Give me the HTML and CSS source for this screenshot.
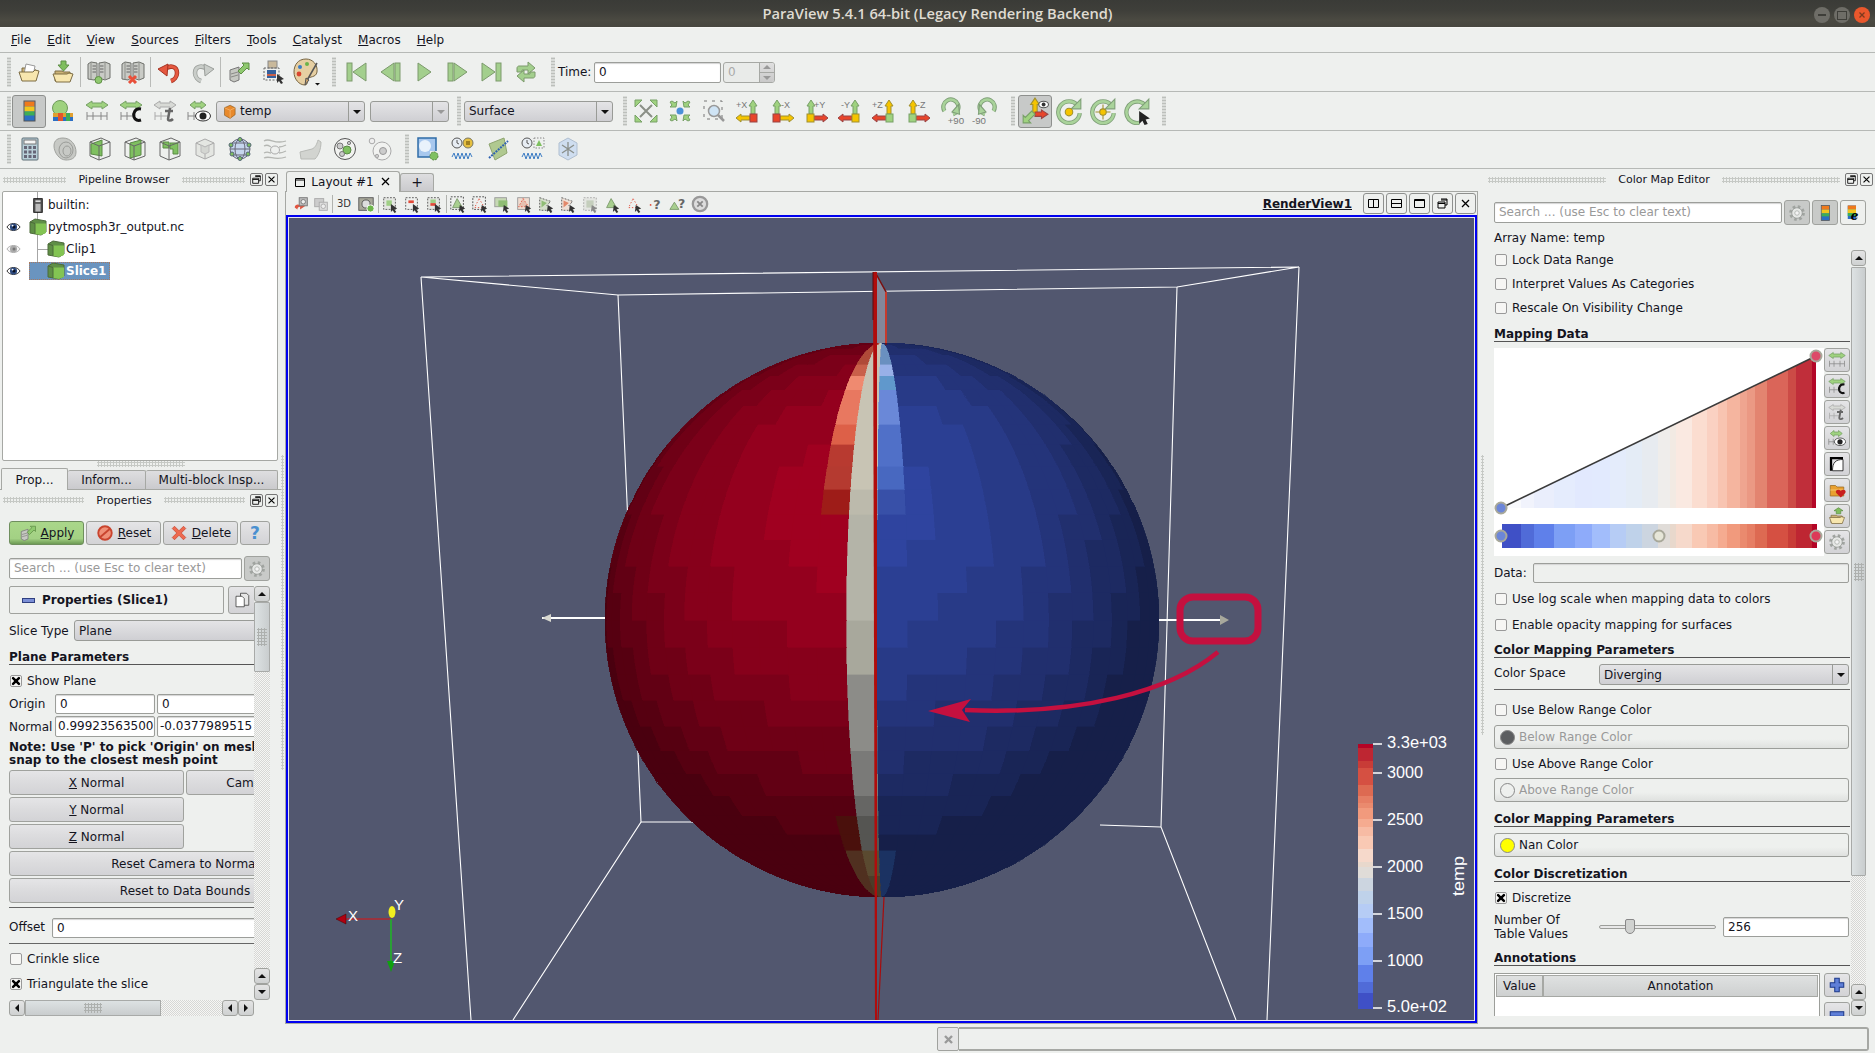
FILE: index.html
```html
<!DOCTYPE html>
<html lang="en">
<head>
<meta charset="utf-8">
<title>ParaView 5.4.1 64-bit</title>
<link rel="stylesheet" href="styles.css">
</head>
<body>
<svg class="defs" xmlns="http://www.w3.org/2000/svg">
  <symbol id="folder" viewBox="0 0 24 24"><path d="M5 8h8l2 2h4v10H5z" fill="#cdb377" stroke="#7d6c43"/><path d="M9 4l9 2-2 10-9-2z" fill="#fff" stroke="#999"/><path d="M2 12h14l2-2 4 1-3 10H5z" fill="#f7e6ae" stroke="#7d6c43"/></symbol>
  <symbol id="loadstate" viewBox="0 0 24 24"><path d="M4 11h7l2 1h6v9H4z" fill="#cdb377" stroke="#7d6c43"/><path d="M2 14h14l2-1 4 1-3 8H5z" fill="#f7e6ae" stroke="#7d6c43"/><path d="M10 1h5v4h3l-5.500 6L7 5h3z" fill="#7fbe5e" stroke="#5f8f46"/></symbol>
  <symbol id="towers" viewBox="0 0 24 24"><g fill="#c9cbc6" stroke="#6d6f6a"><path d="M1 4l3-2 6 1v15l-3 2-6-1z"/><path d="M12 3l6-1 5 2v14l-5 2-6-2z"/></g><path d="M4 2.500v17M18 2.500v17" stroke="#8d8f8a" fill="none"/><g stroke="#666"><path d="M5.500 6h3.500M5.500 9h3.500M5.500 12h3.500M13 6h3.500M13 9h3.500M13 12h3.500"/></g></symbol>
  <symbol id="conn" viewBox="0 0 24 24"><use href="#towers"/><path d="M11.500 19v2" stroke="#666"/><circle cx="11.500" cy="20" r="3.500" fill="#8fc96f" stroke="#5f8f46"/></symbol>
  <symbol id="disc" viewBox="0 0 24 24"><use href="#towers"/><path d="M8 16l7 7M15 16l-7 7" stroke="#e8503a" stroke-width="3"/></symbol>
  <symbol id="undo" viewBox="0 0 24 24"><path d="M8 9c5-4 12-3 12 4 0 4-3 7-6 8" fill="none" stroke="#a53323" stroke-width="4.500"/><path d="M8 9c5-4 12-3 12 4 0 4-3 7-6 8" fill="none" stroke="#e5583f" stroke-width="3"/><path d="M1 9l10-5-1 12z" fill="#e5583f" stroke="#a53323"/></symbol>
  <symbol id="redo" viewBox="0 0 24 24"><path d="M16 9c-5-4-12-3-12 4 0 4 3 7 6 8" fill="none" stroke="#9a9e9a" stroke-width="4.500"/><path d="M16 9c-5-4-12-3-12 4 0 4 3 7 6 8" fill="none" stroke="#c9cdc9" stroke-width="3"/><path d="M23 9L13 4l1 12z" fill="#c9cdc9" stroke="#9a9e9a"/></symbol>
  <symbol id="autoapply" viewBox="0 0 24 24"><path d="M3 10l9-3v13l-5 2-4-2z" fill="#c6c8c2" stroke="#777"/><path d="M4 14l7-2M4 17l7-2" stroke="#8a8a86"/><path d="M11 11l6-6-2-2h7v7l-2-2-6 6z" fill="#8fc96f" stroke="#5f8f46"/></symbol>
  <symbol id="pick" viewBox="0 0 24 24"><rect x="7" y="1" width="9" height="7" fill="#c9b99b" stroke="#888"/><rect x="3" y="8" width="15" height="12" fill="none" stroke="#666" stroke-dasharray="2 1.500"/><rect x="6" y="10" width="9" height="8" fill="#35609c"/><rect x="6" y="14" width="9" height="2" fill="#c9604a"/><path d="M16 14l7 5-3 1 2 3-2 1-2-3-2 2z" fill="#333"/></symbol>
  <symbol id="palette" viewBox="0 0 28 28"><path d="M13 1C5 1 1 7 1 14s5 13 11 13c3 0 2-4 3-6 1-3 8-1 9-7C25 7 20 1 13 1z" fill="#e6cfa2" stroke="#776542"/><circle cx="7" cy="9" r="2" fill="#3c7cc4"/><circle cx="14" cy="6" r="2" fill="#6cb34a"/><circle cx="6" cy="16" r="2.400" fill="#d9452f"/><path d="M24 5L13 24" stroke="#555" stroke-width="1.500"/><path d="M13 20l3 2-4 5z" fill="#caa26b" stroke="#555"/><path d="M22 25h5l-2.500 2.500z" fill="#111"/></symbol>
  <symbol id="first" viewBox="0 0 24 24"><g fill="#a3cf8d" stroke="#7c9a6c"><rect x="3" y="3" width="5" height="18"/><path d="M22 3v18L9 12z"/></g></symbol>
  <symbol id="prev" viewBox="0 0 24 24"><g fill="#a3cf8d" stroke="#7c9a6c"><path d="M16 3v18L3 12z"/><rect x="17" y="3" width="5" height="18"/></g></symbol>
  <symbol id="play" viewBox="0 0 24 24"><path d="M6 3v18l13-9z" fill="#a3cf8d" stroke="#7c9a6c"/></symbol>
  <symbol id="next" viewBox="0 0 24 24"><g fill="#a3cf8d" stroke="#7c9a6c"><rect x="2" y="3" width="5" height="18"/><path d="M8 3v18l13-9z"/></g></symbol>
  <symbol id="last" viewBox="0 0 24 24"><g fill="#a3cf8d" stroke="#7c9a6c"><path d="M2 3v18l13-9z"/><rect x="16" y="3" width="5" height="18"/></g></symbol>
  <symbol id="loop" viewBox="0 0 24 24"><g fill="#a3cf8d" stroke="#7c9a6c"><path d="M5 6h9V2l7 6-7 6v-4H8v2H3V8c0-1 1-2 2-2z"/><path d="M19 18h-9v4l-7-6 7-6v4h6v-2h5v4c0 1-1 2-2 2z"/></g></symbol>
  <symbol id="rainbow" viewBox="0 0 24 24"><rect x="7" y="2" width="11" height="20" fill="#2b6fc4" stroke="#555"/><rect x="7.500" y="2.500" width="10" height="5" fill="#ef7a1c"/><rect x="7.500" y="7.500" width="10" height="5" fill="#f2c61e"/><rect x="7.500" y="12.500" width="10" height="4" fill="#3fae55"/></symbol>
  <symbol id="scalarbar" viewBox="0 0 24 24"><circle cx="9" cy="9" r="7.500" fill="#9fd27f" stroke="#6e9a5a"/><rect x="2" y="14" width="20" height="8" fill="#e0a030"/><rect x="2" y="18" width="20" height="4" fill="#2b6fc4"/><rect x="7" y="14" width="5" height="8" fill="#e2542c"/><rect x="15" y="14" width="4" height="8" fill="#3fae55"/></symbol>
  <symbol id="rescale" viewBox="0 0 24 24"><path d="M1 6l6-4v2h10V2l6 4-6 4V8H7v2z" fill="#9fd27f" stroke="#77a066"/><path d="M2 17h20M2 13v8M8 13v8M16 13v8M22 13v8" stroke="#888" fill="none"/></symbol>
  <symbol id="rescaleC" viewBox="0 0 24 24"><path d="M1 6l6-4v2h10V2l6 4-6 4V8H7v2z" fill="#9fd27f" stroke="#77a066"/><path d="M2 17h14M2 13v8M8 13v8" stroke="#888" fill="none"/><path d="M22 10c-6-1-8 4-7 8 1 3 4 4 7 3" fill="none" stroke="#111" stroke-width="3"/></symbol>
  <symbol id="rescaleT" viewBox="0 0 24 24"><path d="M1 6l6-4v2h10V2l6 4-6 4V8H7v2z" fill="#d8dad6" stroke="#aaa"/><path d="M2 17h14M2 13v8M8 13v8" stroke="#aaa" fill="none"/><path d="M17 9l-2 11c0 2 3 2 5 0M12 12h8" fill="none" stroke="#666" stroke-width="2.500"/></symbol>
  <symbol id="rescaleE" viewBox="0 0 24 24"><path d="M3 6l5-4v2h6V2l5 4-5 4V8H8v2z" fill="#9fd27f" stroke="#77a066"/><path d="M1 17h9M1 13v8M7 13v8" stroke="#888" fill="none"/><ellipse cx="16" cy="17" rx="7.500" ry="5" fill="#fff" stroke="#333"/><circle cx="16" cy="17" r="3.500" fill="#222"/></symbol>
  <symbol id="cubeO" viewBox="0 0 24 24"><path d="M4 6l9-4 8 4v11l-8 6-9-5z" fill="#e8892c" stroke="#8a5a20"/><path d="M4 6l9 4 8-4M13 10v13" fill="none" stroke="#f8c080"/></symbol>
  <symbol id="cubeG" viewBox="0 0 18 18"><path d="M1 4l5-3 11 2v11l-5 3-11-2z" fill="#5f8f46" stroke="#4d6b3b"/><path d="M6 5.500h11V15l-5 2-6-1z" fill="#83c453"/><path d="M1 4l5 1.500V16" fill="none" stroke="#4d6b3b"/></symbol>
  <symbol id="server" viewBox="0 0 14 18"><rect x="2" y="1" width="10" height="16" fill="#555" stroke="#111"/><rect x="4" y="3" width="6" height="2" fill="#ddd"/><rect x="4" y="7" width="6" height="9" fill="#bbb"/></symbol>
  <symbol id="eye" viewBox="0 0 16 12"><path d="M1 6c3-5 11-5 14 0-3 5-11 5-14 0z" fill="#fff" stroke="#222"/><circle cx="8" cy="6" r="3.800" fill="#2c4a80"/><circle cx="8.500" cy="6" r="1.600" fill="#0a1020"/><circle cx="7" cy="4.500" r="1" fill="#fff"/></symbol>
  <symbol id="eyeoff" viewBox="0 0 16 12"><path d="M1 6c3-5 11-5 14 0-3 5-11 5-14 0z" fill="#f4f4f4" stroke="#aaa"/><circle cx="8" cy="6" r="3.800" fill="#aaa"/><circle cx="8.500" cy="6" r="1.600" fill="#777"/></symbol>
  <symbol id="check" viewBox="0 0 12 12"><path d="M2.500 2.500l7 7M9.500 2.500l-7 7" stroke="#000" stroke-width="3" stroke-linecap="round"/></symbol>
  <symbol id="float" viewBox="0 0 13 13"><path d="M5 2h6v6H9M2 5h7v6H2zM2 6.500h7M5 3h6" fill="none" stroke="#000"/></symbol>
  <symbol id="close" viewBox="0 0 13 13"><path d="M3 3l7 7M10 3l-7 7" stroke="#000" stroke-width="1.300"/></symbol>
  <symbol id="gear" viewBox="0 0 24 24"><circle cx="12" cy="12" r="8.500" fill="none" stroke="#a0a4a0" stroke-width="4" stroke-dasharray="3.400 3.270"/><circle cx="12" cy="12" r="7" fill="#e6e8e6" stroke="#909490"/><circle cx="12" cy="12" r="3" fill="#f4f4f4" stroke="#a8aca8"/></symbol>
  <symbol id="reset4" viewBox="0 0 24 24"><path d="M6 6l12 12M18 6L6 18" stroke="#8a8f86" stroke-width="2"/><g fill="#9fd27f" stroke="#77a066"><path d="M1 1h7L1 8zM23 1h-7l7 7zM1 23h7l-7-7zM23 23h-7l7-7z"/></g></symbol>
  <symbol id="zoomdata" viewBox="0 0 24 24"><circle cx="12" cy="12" r="3.500" fill="#4a90d8"/><g fill="#9fd27f" stroke="#77a066"><path d="M8 8H2l2-2-2-3 2-1 3 2 2-2zM16 8h6l-2-2 2-3-2-1-3 2-2-2zM8 16H2l2 2-2 3 2 1 3-2 2 2zM16 16h6l-2 2 2 3-2 1-3-2-2 2z"/></g></symbol>
  <symbol id="zoombox" viewBox="0 0 24 24"><rect x="2" y="2" width="18" height="18" fill="none" stroke="#777" stroke-dasharray="3 5"/><circle cx="12" cy="12" r="5.500" fill="#cfe4f5" stroke="#999" stroke-width="1.500"/><path d="M16 16l6 6" stroke="#999" stroke-width="2.500"/></symbol>
  <symbol id="pX" viewBox="0 0 24 24"><path d="M17 1l4 6h-2v8h-4V7h-2z" fill="#9fd27f" stroke="#77a066"/><path d="M0 19l5-4v2h9v4H5v2z" fill="#f5c400" stroke="#a09030"/><rect x="14" y="15" width="7" height="8" fill="#e8452a" stroke="#944"/></symbol>
  <symbol id="mX" viewBox="0 0 24 24"><path d="M7 1l4 6H9v8H5V7H3z" fill="#9fd27f" stroke="#77a066"/><path d="M24 19l-5-4v2h-9v4h9v2z" fill="#f5c400" stroke="#a09030"/><rect x="3" y="15" width="7" height="8" fill="#e8452a" stroke="#944"/></symbol>
  <symbol id="pY" viewBox="0 0 24 24"><path d="M7 1l4 6H9v8H5V7H3z" fill="#9fd27f" stroke="#77a066"/><path d="M24 19l-5-4v2h-9v4h9v2z" fill="#e8452a" stroke="#944"/><rect x="3" y="15" width="7" height="8" fill="#f5c400" stroke="#a09030"/></symbol>
  <symbol id="mY" viewBox="0 0 24 24"><path d="M17 1l4 6h-2v8h-4V7h-2z" fill="#9fd27f" stroke="#77a066"/><path d="M0 19l5-4v2h9v4H5v2z" fill="#e8452a" stroke="#944"/><rect x="14" y="15" width="7" height="8" fill="#f5c400" stroke="#a09030"/></symbol>
  <symbol id="pZ" viewBox="0 0 24 24"><path d="M17 1l4 6h-2v8h-4V7h-2z" fill="#f5c400" stroke="#a09030"/><path d="M0 19l5-4v2h9v4H5v2z" fill="#e8452a" stroke="#944"/><rect x="14" y="15" width="7" height="8" fill="#9fd27f" stroke="#77a066"/></symbol>
  <symbol id="mZ" viewBox="0 0 24 24"><path d="M7 1l4 6H9v8H5V7H3z" fill="#f5c400" stroke="#a09030"/><path d="M24 19l-5-4v2h-9v4h9v2z" fill="#e8452a" stroke="#944"/><rect x="3" y="15" width="7" height="8" fill="#9fd27f" stroke="#77a066"/></symbol>
  <symbol id="rotP" viewBox="0 0 26 26"><path d="M14 16a7 7 0 1 0-8-3" fill="none" stroke="#7f9f78" stroke-width="4"/><path d="M14 16a7 7 0 1 0-8-3" fill="none" stroke="#a9d39a" stroke-width="2.400"/><path d="M19 7l1 9-7-2z" fill="#a9d39a" stroke="#7f9f78"/></symbol>
  <symbol id="rotM" viewBox="0 0 26 26"><path d="M12 16a7 7 0 1 1 8-3" fill="none" stroke="#7f9f78" stroke-width="4"/><path d="M12 16a7 7 0 1 1 8-3" fill="none" stroke="#a9d39a" stroke-width="2.400"/><path d="M7 7L6 16l7-2z" fill="#a9d39a" stroke="#7f9f78"/></symbol>
  <symbol id="axes" viewBox="0 0 26 26"><path d="M13 1l4 6h-2v9h-4V7H9z" fill="#f5c400" stroke="#a09030"/><path d="M13 14h6v-2l6 4-6 4v-2h-6z" fill="#e8452a" stroke="#944"/><path d="M13 16l-6 6 2 2H2v-7l2 2 6-6z" fill="#9fd27f" stroke="#77a066"/><ellipse cx="21" cy="7" rx="4.500" ry="3" fill="#fff" stroke="#555"/><circle cx="21" cy="7" r="1.800" fill="#333"/></symbol>
  <symbol id="cen1" viewBox="0 0 26 26"><path d="M21 8a10 10 0 1 0 2 7" fill="none" stroke="#7f9f78" stroke-width="4"/><path d="M21 8a10 10 0 1 0 2 7" fill="none" stroke="#a9d39a" stroke-width="2.400"/><path d="M24 2v9h-9z" fill="#a9d39a" stroke="#7f9f78"/><circle cx="13" cy="14" r="3.500" fill="#f5c400" stroke="#a09030"/></symbol>
  <symbol id="cen2" viewBox="0 0 26 26"><path d="M21 8a10 10 0 1 0 2 7" fill="none" stroke="#7f9f78" stroke-width="4"/><path d="M21 8a10 10 0 1 0 2 7" fill="none" stroke="#a9d39a" stroke-width="2.400"/><path d="M24 2v9h-9z" fill="#a9d39a" stroke="#7f9f78"/><path d="M13 7v14M6 14h14" stroke="#a09030"/><circle cx="13" cy="14" r="3" fill="#f5c400" stroke="#a09030"/></symbol>
  <symbol id="cen3" viewBox="0 0 26 26"><path d="M21 8a10 10 0 1 0-6 16" fill="none" stroke="#7f9f78" stroke-width="4"/><path d="M21 8a10 10 0 1 0-6 16" fill="none" stroke="#a9d39a" stroke-width="2.400"/><path d="M24 2v9h-9z" fill="#a9d39a" stroke="#7f9f78"/><path d="M15 13l10 7-4 1 2 4-3 1-2-4-3 3z" fill="#222"/></symbol>
  <symbol id="calc" viewBox="0 0 24 24"><rect x="4" y="1" width="16" height="22" rx="1" fill="#b8cfd8" stroke="#5f6f76"/><rect x="6" y="3" width="12" height="4" fill="#f4f4f4" stroke="#777"/><g fill="#667"><rect x="6" y="9" width="3" height="3"/><rect x="10.500" y="9" width="3" height="3"/><rect x="15" y="9" width="3" height="3"/><rect x="6" y="13.500" width="3" height="3"/><rect x="10.500" y="13.500" width="3" height="3"/><rect x="15" y="13.500" width="3" height="3"/><rect x="6" y="18" width="3" height="3"/><rect x="10.500" y="18" width="3" height="3"/><rect x="15" y="18" width="3" height="3"/></g></symbol>
  <symbol id="contour" viewBox="0 0 24 24"><path d="M10 1c8 0 13 7 13 14s-6 8-10 8C6 23 1 15 1 9s4-8 9-8z" fill="#c7c9c5" stroke="#a0a29e"/><ellipse cx="13" cy="13" rx="7" ry="8" fill="none" stroke="#9a9c98"/><ellipse cx="14" cy="14" rx="4" ry="5" fill="none" stroke="#9a9c98"/></symbol>
  <symbol id="clip" viewBox="0 0 24 24"><path d="M2 5l11-4 9 4v14l-11 4-9-4z" fill="#eef0ee" stroke="#666"/><path d="M3 7l11-4v16L3 17z" fill="#7fc060" stroke="#5a8a45"/><path d="M2 5l9 4 11-4M11 9v14" fill="none" stroke="#666"/></symbol>
  <symbol id="slicei" viewBox="0 0 24 24"><path d="M2 5l11-4 9 4v14l-11 4-9-4z" fill="#eef0ee" stroke="#666"/><path d="M7 6l11-3v15l-11 3z" fill="#7fc060" stroke="#5a8a45"/><path d="M2 5l9 4 11-4M11 9v14" fill="none" stroke="#666"/></symbol>
  <symbol id="thresh" viewBox="0 0 24 24"><path d="M2 5l11-4 9 4v14l-11 4-9-4z" fill="#eef0ee" stroke="#666"/><path d="M5 5h6v6H5zM12 6h8v11h-5v-5h-3z" fill="#7fc060" stroke="#5a8a45"/><path d="M2 5l9 4 11-4M11 9v14" fill="none" stroke="#666"/></symbol>
  <symbol id="extract" viewBox="0 0 24 24"><path d="M3 6l9-4 9 4v12l-9 4-9-4z" fill="#e4e6e2" stroke="#aaa"/><path d="M3 6l9 4 9-4M12 10v12" fill="none" stroke="#aaa"/><path d="M8 8l4 2 4-2v7l-4 2-4-2z" fill="#d4d6d2" stroke="#bbb"/></symbol>
  <symbol id="glyph" viewBox="0 0 24 24"><circle cx="12" cy="12" r="10" fill="#c6d6ee" stroke="#667"/><ellipse cx="12" cy="12" rx="5" ry="10" fill="none" stroke="#667"/><path d="M2 12h20M4 6h16M4 18h16" stroke="#667" fill="none"/><g fill="#7fc060" stroke="#567"><circle cx="12" cy="2.500" r="2"/><circle cx="3" cy="8" r="2"/><circle cx="21" cy="8" r="2"/><circle cx="4" cy="17" r="2"/><circle cx="20" cy="17" r="2"/><circle cx="12" cy="21.500" r="2"/></g></symbol>
  <symbol id="stream" viewBox="0 0 24 24"><g fill="none" stroke="#b4b6b2" stroke-width="1.300"><path d="M1 4c6-4 10 4 22 0M1 9c4-2 5 0 7 1M16 10c3 0 5-1 7-2M1 16c4-2 5 0 7 0M16 16c3 0 5-1 7-2M1 21c6-3 10 3 22-1"/></g><ellipse cx="12" cy="13" rx="4.500" ry="4" fill="none" stroke="#aaa"/></symbol>
  <symbol id="warp" viewBox="0 0 24 24"><path d="M2 15l12-3c3-1 5-5 6-9l3 2c0 8-3 14-6 17H3z" fill="#d2d4d0" stroke="#b8bab6"/></symbol>
  <symbol id="group" viewBox="0 0 24 24"><circle cx="12" cy="12" r="10.500" fill="#f1f2f0" stroke="#555"/><circle cx="7" cy="9" r="3" fill="#ccc" stroke="#777"/><circle cx="14" cy="13" r="4" fill="#7fc060" stroke="#5a8a45"/><circle cx="9" cy="17" r="2.500" fill="#ccc" stroke="#777"/><circle cx="16" cy="6" r="1.600" fill="#ccc" stroke="#777"/></symbol>
  <symbol id="level" viewBox="0 0 24 24"><circle cx="14" cy="14" r="9" fill="#f1f2f0" stroke="#aaa"/><circle cx="15" cy="14" r="3.500" fill="#ccc" stroke="#999"/><circle cx="4" cy="4" r="2.800" fill="#eee" stroke="#aaa"/><circle cx="9" cy="19" r="1.700" fill="#ccc" stroke="#aaa"/></symbol>
  <symbol id="sheet" viewBox="0 0 24 24"><rect x="2" y="1" width="18" height="19" fill="#a8c8ee" stroke="#2f6ca8" stroke-width="1.500"/><circle cx="9" cy="9" r="6" fill="#e9f2fb"/><rect x="14" y="14" width="9" height="9" fill="#eef0ee"/><circle cx="18" cy="19" r="4" fill="#7fc060" stroke="#5a8a45" stroke-dasharray="2 1"/></symbol>
  <symbol id="plotsel" viewBox="0 0 24 24"><circle cx="6" cy="6" r="5" fill="#e8eef4" stroke="#555"/><path d="M6 3v3l2 1" stroke="#555" fill="none"/><circle cx="17" cy="6" r="5" fill="#e6c040" stroke="#776"/><rect x="15" y="4" width="4" height="4" fill="#a08020"/><path d="M1 20l2-4 2 6 2-6 2 6 2-6 2 6 2-6 2 6 2-6 2 4" fill="none" stroke="#3c7cc4"/></symbol>
  <symbol id="plotline" viewBox="0 0 24 24"><path d="M3 7l15-6 3 15-12 7z" fill="#b0c990" stroke="#8fa570"/><path d="M3 21L22 4" stroke="#2f62b0" stroke-width="2" stroke-dasharray="2 1"/></symbol>
  <symbol id="plottime" viewBox="0 0 24 24"><circle cx="6" cy="6" r="5" fill="#e8eef4" stroke="#555"/><path d="M6 3v3l2 1" stroke="#555" fill="none"/><rect x="13" y="1" width="10" height="10" fill="none" stroke="#888" stroke-dasharray="1.500 1.500"/><path d="M18 3l3 6h-6z" fill="#7fc060"/><path d="M1 20l2-4 2 6 2-6 2 6 2-6 2 6 2-6 2 6 2-6 2 4" fill="none" stroke="#3c7cc4"/></symbol>
  <symbol id="hex" viewBox="0 0 24 24"><path d="M12 1l9 5v12l-9 5-9-5V6z" fill="#cfdef0" stroke="#b0bfd0"/><path d="M12 5v14M6 8l12 8M18 8L6 16" stroke="#8a8f8a" stroke-width="1.300"/></symbol>
  <symbol id="vr1" viewBox="0 0 20 20"><path d="M3 14c0-4 4-4 6-3V8l6 4-6 4v-3c-2 0-3 1-3 3z" fill="#e25540"/><rect x="8" y="3" width="9" height="9" fill="#bbb" stroke="#777"/><circle cx="12.500" cy="7.500" r="2.500" fill="#eee" stroke="#777"/></symbol>
  <symbol id="vr2" viewBox="0 0 20 20"><rect x="3" y="4" width="10" height="9" fill="#ccc" stroke="#aaa"/><rect x="8" y="8" width="9" height="9" fill="#ddd" stroke="#aaa"/><circle cx="12.500" cy="12.500" r="2.500" fill="#eee" stroke="#aaa"/></symbol>
  <symbol id="cam" viewBox="0 0 20 20"><rect x="2" y="3" width="16" height="14" fill="#a8a89a" stroke="#555"/><circle cx="10" cy="10" r="4.500" fill="#ddd" stroke="#555"/><circle cx="15" cy="15" r="4" fill="#6db54a" stroke="#fff"/></symbol>
  <symbol id="sel1" viewBox="0 0 20 20"><rect x="3" y="3" width="13" height="13" fill="#e4e6e2" stroke="#555" stroke-dasharray="2 1.500"/><rect x="6" y="6" width="6" height="6" fill="#9fcf85"/><path d="M11 10l7 5-3 1 2 3-2 1-2-3-2 2z" fill="#333"/></symbol>
  <symbol id="sel2" viewBox="0 0 20 20"><rect x="3" y="3" width="13" height="13" fill="#eef0ee" stroke="#555" stroke-dasharray="2 1.500"/><rect x="6" y="6" width="6" height="3" fill="#e24a38"/><path d="M11 10l7 5-3 1 2 3-2 1-2-3-2 2z" fill="#333"/></symbol>
  <symbol id="sel3" viewBox="0 0 20 20"><rect x="3" y="3" width="13" height="13" fill="#e4e6e2" stroke="#555" stroke-dasharray="2 1.500"/><rect x="6" y="5" width="6" height="4" fill="#9fcf85"/><rect x="6" y="9" width="6" height="3" fill="#e24a38"/><path d="M11 10l7 5-3 1 2 3-2 1-2-3-2 2z" fill="#333"/></symbol>
  <symbol id="tri1" viewBox="0 0 20 20"><rect x="2" y="2" width="14" height="14" fill="none" stroke="#444" stroke-dasharray="2 1.500"/><path d="M9 4l6 10H4z" fill="#a8cf8f" stroke="#7c9a6c"/><path d="M12 11l6 4-3 1 2 3-2 1-2-3-2 2z" fill="#333"/></symbol>
  <symbol id="tri2" viewBox="0 0 20 20"><rect x="2" y="2" width="14" height="14" fill="none" stroke="#444" stroke-dasharray="2 1.500"/><path d="M9 4l6 10H4z" fill="none" stroke="#e24a38" stroke-dasharray="1.500 2"/><path d="M12 11l6 4-3 1 2 3-2 1-2-3-2 2z" fill="#333"/></symbol>
  <symbol id="blk1" viewBox="0 0 20 20"><rect x="2" y="3" width="13" height="10" fill="#c6d8b4" stroke="#999"/><rect x="6" y="6" width="10" height="7" fill="#8fbd74"/><path d="M12 11l6 4-3 1 2 3-2 1-2-3-2 2z" fill="#333"/></symbol>
  <symbol id="blk2" viewBox="0 0 20 20"><rect x="3" y="3" width="13" height="13" fill="#f0dcd0" stroke="#999"/><path d="M9 4l6 9H4z" fill="#e8c0b0" stroke="#e24a38" stroke-dasharray="1.500 2"/><path d="M12 11l6 4-3 1 2 3-2 1-2-3-2 2z" fill="#333"/></symbol>
  <symbol id="blk3" viewBox="0 0 20 20"><path d="M3 3l12 4-4 5 5 5H3z" fill="#d4dfca" stroke="#555" stroke-dasharray="2 1.500"/><path d="M5 6l6 3-6 5z" fill="#8fbd74"/><path d="M12 11l6 4-3 1 2 3-2 1-2-3-2 2z" fill="#333"/></symbol>
  <symbol id="blk4" viewBox="0 0 20 20"><path d="M3 3l12 4-4 5 5 5H3z" fill="#eee0d6" stroke="#555" stroke-dasharray="2 1.500"/><path d="M5 6l6 3-6 5z" fill="#e2886a"/><path d="M12 11l6 4-3 1 2 3-2 1-2-3-2 2z" fill="#333"/></symbol>
  <symbol id="blk5" viewBox="0 0 20 20"><rect x="3" y="3" width="14" height="14" fill="#e4e6e2" stroke="#aaa" stroke-dasharray="2 1.500"/><rect x="6" y="6" width="8" height="8" fill="#c4cebc"/><path d="M12 11l6 4-3 1 2 3-2 1-2-3-2 2z" fill="#888"/></symbol>
  <symbol id="tri3" viewBox="0 0 20 20"><path d="M9 4l6 10H4z" fill="#a8cf8f" stroke="#7c9a6c"/><path d="M12 11l6 4-3 1 2 3-2 1-2-3-2 2z" fill="#333"/></symbol>
  <symbol id="tri4" viewBox="0 0 20 20"><path d="M9 4l6 10H4z" fill="none" stroke="#e24a38" stroke-dasharray="1.500 2"/><path d="M12 11l6 4-3 1 2 3-2 1-2-3-2 2z" fill="#333"/></symbol>
  <symbol id="q2" viewBox="0 0 20 20"><path d="M6 8l5 8H1z" fill="#a8cf8f" stroke="#7c9a6c"/></symbol>
  <symbol id="clearsel" viewBox="0 0 20 20"><circle cx="10" cy="10" r="8" fill="#ddd" stroke="#999" stroke-width="2.500"/><path d="M7 7l6 6M13 7l-6 6" stroke="#888" stroke-width="2"/></symbol>
  <symbol id="invert" viewBox="0 0 24 24"><path d="M4 21V4h16" fill="none" stroke="#000" stroke-width="3"/><path d="M6 21C6 10 10 6 20 6v15z" fill="#fff" stroke="#000"/></symbol>
  <symbol id="fheart" viewBox="0 0 24 24"><path d="M3 6h7l2 2h9v12H3z" fill="#e9a030" stroke="#9a6a20"/><path d="M3 12h18" stroke="#f8d080"/><path d="M17 22l-6-6c-2-3 2-6 6-3 4-3 8 0 6 3z" fill="#c81e1e"/></symbol>
  <symbol id="fimport" viewBox="0 0 24 24"><path d="M4 11h7l2 1h6v9H4z" fill="#cdb377" stroke="#7d6c43"/><path d="M2 14h14l2-1 4 1-3 8H5z" fill="#f7e6ae" stroke="#7d6c43"/><path d="M11 9V5H8l6-4 6 4h-3v4z" fill="#7fbe5e" stroke="#5f8f46"/></symbol>
  <symbol id="rainbowe" viewBox="0 0 24 24"><rect x="5" y="2" width="11" height="18" fill="#2b6fc4"/><rect x="5" y="2" width="11" height="5" fill="#ef7a1c"/><rect x="5" y="7" width="11" height="5" fill="#f2c61e"/><rect x="5" y="12" width="11" height="4" fill="#3fae55"/></symbol>
  <symbol id="plus" viewBox="0 0 24 24"><path d="M9 3h6v6h6v6h-6v6H9v-6H3V9h6z" fill="#5f7fd8" stroke="#1d3a8a" stroke-width="1.400"/></symbol>
  <symbol id="minus" viewBox="0 0 24 24"><rect x="3" y="9" width="18" height="6" fill="#5f7fd8" stroke="#1d3a8a" stroke-width="1.400"/></symbol>
  <symbol id="copyi" viewBox="0 0 24 24"><path d="M10 3h8l3 3v13H10z" fill="#e6e6e6" stroke="#333"/><path d="M4 7h8l3 3v11H4z" fill="#fff" stroke="#333"/></symbol>
  <symbol id="reseti" viewBox="0 0 24 24"><circle cx="12" cy="12" r="9" fill="#f09078" stroke="#c9442e" stroke-width="2.500"/><path d="M5 18L19 6" stroke="#c9442e" stroke-width="2.500"/></symbol>
  <symbol id="deli" viewBox="0 0 24 24"><path d="M3 6l3-3 6 6 6-6 3 3-6 6 6 6-3 3-6-6-6 6-3-3 6-6z" fill="#ee6a50" stroke="#c9442e"/></symbol>
</svg>

<header class="titlebar">
  <span class="apptitle">ParaView 5.4.1 64-bit (Legacy Rendering Backend)</span>
  <div class="wm">
    <span class="wm-b wm-min"></span><span class="wm-b wm-max"></span><span class="wm-b wm-cl"><svg viewBox="0 0 10 10"><path d="M2.500 2.500l5 5M7.500 2.500l-5 5" stroke="#7c3a1e" stroke-width="1.300"/></svg></span>
  </div>
</header>

<nav class="menubar">
  <span><u>F</u>ile</span><span><u>E</u>dit</span><span><u>V</u>iew</span><span><u>S</u>ources</span><span><u>F</u>ilters</span><span><u>T</u>ools</span><span><u>C</u>atalyst</span><span><u>M</u>acros</span><span><u>H</u>elp</span>
</nav>

<div class="toolbar">
  <i class="tgrip first"></i>
  <span class="tb"><svg class="i"><use href="#folder"/></svg></span>
  <span class="tb"><svg class="i"><use href="#loadstate"/></svg></span>
  <i class="tsep"></i>
  <span class="tb"><svg class="i"><use href="#conn"/></svg></span>
  <span class="tb"><svg class="i"><use href="#disc"/></svg></span>
  <i class="tsep"></i>
  <span class="tb"><svg class="i"><use href="#undo"/></svg></span>
  <span class="tb"><svg class="i"><use href="#redo"/></svg></span>
  <i class="tsep"></i>
  <span class="tb"><svg class="i"><use href="#autoapply"/></svg></span>
  <span class="tb"><svg class="i"><use href="#pick"/></svg></span>
  <span class="tb"><svg class="i big"><use href="#palette"/></svg></span>
  <i class="tgrip"></i>
  <span class="tb"><svg class="i"><use href="#first"/></svg></span>
  <span class="tb"><svg class="i"><use href="#prev"/></svg></span>
  <span class="tb"><svg class="i"><use href="#play"/></svg></span>
  <span class="tb"><svg class="i"><use href="#next"/></svg></span>
  <span class="tb"><svg class="i"><use href="#last"/></svg></span>
  <span class="tb"><svg class="i"><use href="#loop"/></svg></span>
  <i class="tgrip"></i>
  <span class="timelbl">Time:</span>
  <span class="field timefield">0</span>
  <span class="spin"><span class="spin-val">0</span><span class="spin-btns"><b class="ar up"></b><b class="ar dn"></b></span></span>
</div>

<div class="toolbar">
  <i class="tgrip first"></i>
  <span class="tb on"><svg class="i"><use href="#rainbow"/></svg></span>
  <span class="tb"><svg class="i"><use href="#scalarbar"/></svg></span>
  <span class="tb"><svg class="i"><use href="#rescale"/></svg></span>
  <span class="tb"><svg class="i"><use href="#rescaleC"/></svg></span>
  <span class="tb"><svg class="i"><use href="#rescaleT"/></svg></span>
  <span class="tb"><svg class="i"><use href="#rescaleE"/></svg></span>
  <span class="combo c-temp"><svg class="mini"><use href="#cubeO"/></svg><em>temp</em><span class="drop"></span></span>
  <span class="combo c-comp dis"><em></em><span class="drop"></span></span>
  <i class="tgrip g2"></i>
  <span class="combo c-surf"><em>Surface</em><span class="drop"></span></span>
  <i class="tgrip g3"></i>
  <span class="tb"><svg class="i"><use href="#reset4"/></svg></span>
  <span class="tb"><svg class="i"><use href="#zoomdata"/></svg></span>
  <span class="tb"><svg class="i"><use href="#zoombox"/></svg></span>
  <span class="tb"><svg class="i" viewBox="0 0 24 24"><use href="#pX"/><text class="axt" x="0" y="9">+X</text></svg></span>
  <span class="tb"><svg class="i" viewBox="0 0 24 24"><use href="#mX"/><text class="axt" x="11" y="9">-X</text></svg></span>
  <span class="tb"><svg class="i" viewBox="0 0 24 24"><use href="#pY"/><text class="axt" x="10" y="9">+Y</text></svg></span>
  <span class="tb"><svg class="i" viewBox="0 0 24 24"><use href="#mY"/><text class="axt" x="3" y="9">-Y</text></svg></span>
  <span class="tb"><svg class="i" viewBox="0 0 24 24"><use href="#pZ"/><text class="axt" x="0" y="9">+Z</text></svg></span>
  <span class="tb"><svg class="i" viewBox="0 0 24 24"><use href="#mZ"/><text class="axt" x="11" y="9">-Z</text></svg></span>
  <span class="tb"><svg class="i big" viewBox="0 0 26 26"><use href="#rotP"/><text class="axt" x="9" y="25">+90</text></svg></span>
  <span class="tb"><svg class="i big" viewBox="0 0 26 26"><use href="#rotM"/><text class="axt" x="0" y="25">-90</text></svg></span>
  <i class="tgrip"></i>
  <span class="tb on"><svg class="i big"><use href="#axes"/></svg></span>
  <span class="tb"><svg class="i big"><use href="#cen1"/></svg></span>
  <span class="tb"><svg class="i big"><use href="#cen2"/></svg></span>
  <span class="tb"><svg class="i big"><use href="#cen3"/></svg></span>
  <i class="tgrip"></i>
</div>

<div class="toolbar t3">
  <i class="tgrip first"></i>
  <span class="tb"><svg class="i"><use href="#calc"/></svg></span>
  <span class="tb"><svg class="i"><use href="#contour"/></svg></span>
  <span class="tb"><svg class="i"><use href="#clip"/></svg></span>
  <span class="tb"><svg class="i"><use href="#slicei"/></svg></span>
  <span class="tb"><svg class="i"><use href="#thresh"/></svg></span>
  <span class="tb"><svg class="i"><use href="#extract"/></svg></span>
  <span class="tb"><svg class="i"><use href="#glyph"/></svg></span>
  <span class="tb"><svg class="i"><use href="#stream"/></svg></span>
  <span class="tb"><svg class="i"><use href="#warp"/></svg></span>
  <span class="tb"><svg class="i"><use href="#group"/></svg></span>
  <span class="tb"><svg class="i"><use href="#level"/></svg></span>
  <i class="tgrip g4"></i>
  <span class="tb"><svg class="i"><use href="#sheet"/></svg></span>
  <span class="tb"><svg class="i"><use href="#plotsel"/></svg></span>
  <span class="tb"><svg class="i"><use href="#plotline"/></svg></span>
  <span class="tb"><svg class="i"><use href="#plottime"/></svg></span>
  <span class="tb"><svg class="i"><use href="#hex"/></svg></span>
</div>

<main class="workspace">
  <aside class="dock left">
    <div class="docktitle"><i class="grip"></i><span>Pipeline Browser</span><i class="grip"></i><span class="dbtn"><svg><use href="#float"/></svg></span><span class="dbtn"><svg><use href="#close"/></svg></span></div>
    <div class="tree">
      <div class="row"><span class="eyeslot"></span><span class="item"><svg class="srv"><use href="#server"/></svg><span>builtin:</span></span></div>
      <div class="row"><span class="eyeslot"><svg class="eye"><use href="#eye"/></svg></span><span class="item"><svg class="cube"><use href="#cubeG"/></svg><span>pytmosph3r_output.nc</span></span></div>
      <div class="row child"><span class="eyeslot"><svg class="eye"><use href="#eyeoff"/></svg></span><span class="item"><svg class="cube"><use href="#cubeG"/></svg><span>Clip1</span></span></div>
      <div class="row child"><span class="eyeslot"><svg class="eye"><use href="#eye"/></svg></span><span class="item sel"><svg class="cube"><use href="#cubeG"/></svg><span>Slice1</span></span></div>
    </div>
    <i class="grip hsplit"></i>
    <div class="tabs">
      <span class="tab active">Prop...</span><span class="tab t2">Inform...</span><span class="tab t3t">Multi-block Insp...</span>
    </div>
    <div class="docktitle small"><i class="grip"></i><span>Properties</span><i class="grip"></i><span class="dbtn"><svg><use href="#float"/></svg></span><span class="dbtn"><svg><use href="#close"/></svg></span></div>
    <div class="actions">
      <span class="btn apply"><svg class="bi"><use href="#autoapply"/></svg><span><u>A</u>pply</span></span>
      <span class="btn"><svg class="bi"><use href="#reseti"/></svg><span><u>R</u>eset</span></span>
      <span class="btn"><svg class="bi"><use href="#deli"/></svg><span><u>D</u>elete</span></span>
      <span class="btn help">?</span>
    </div>
    <div class="searchrow">
      <span class="field search">Search ... (use Esc to clear text)</span>
      <span class="btn gearbtn"><svg class="bi"><use href="#gear"/></svg></span>
    </div>
    <div class="panel">
      <div class="pclip">
        <div class="pinner">
          <div class="phead"><span class="pbox"><i class="bluebar"></i><b>Properties (Slice1)</b></span><span class="btn copy"><svg class="bi"><use href="#copyi"/></svg></span></div>
          <div class="frow slicetype"><label>Slice Type</label><span class="combo wide"><em>Plane</em></span></div>
          <div class="section pp">Plane Parameters</div>
          <div class="chk sp"><span class="cb on"><svg><use href="#check"/></svg></span>Show Plane</div>
          <div class="frow origin"><label>Origin</label><span class="field num">0</span><span class="field num">0</span></div>
          <div class="frow normal"><label>Normal</label><span class="field num tight">0.99923563500</span><span class="field num tight">-0.0377989515</span></div>
          <div class="note">Note: Use 'P' to pick 'Origin' on mesh or<br>snap to the closest mesh point</div>
          <div class="normals">
            <span class="btn"><span><u>X</u> Normal</span></span><span class="btn">Camera Normal</span>
            <span class="btn"><span><u>Y</u> Normal</span></span><i></i>
            <span class="btn"><span><u>Z</u> Normal</span></span><i></i>
            <span class="btn full">Reset Camera to Normal</span>
            <span class="btn full">Reset to Data Bounds</span>
          </div>
          <hr class="rule r1">
          <div class="frow offset"><label>Offset</label><span class="field off">0</span></div>
          <hr class="rule r2">
          <div class="chk cr"><span class="cb"></span>Crinkle slice</div>
          <div class="chk tr"><span class="cb on"><svg><use href="#check"/></svg></span>Triangulate the slice</div>
        </div>
      </div>
      <div class="vscroll">
        <span class="sb up"></span><span class="thumb pth"><i class="dots"></i></span><span class="track"></span><span class="sb up"></span><span class="sb dn"></span>
      </div>
    </div>
    <div class="hscroll">
      <span class="sb lf"></span><span class="hthumb"><i class="dots"></i></span><span class="htrack"></span><span class="sb lf"></span><span class="sb rt"></span>
    </div>
  </aside>

  <i class="vsplit"></i>

  <section class="center">
    <div class="tabrow">
      <span class="ltab"><svg class="wnd" viewBox="0 0 12 12"><path d="M1.500 2.500h9v8h-9zM1.500 4h9" fill="none" stroke="#000"/></svg>Layout #1<svg class="wnd x" viewBox="0 0 13 13"><use href="#close"/></svg></span>
      <span class="ltab plus">+</span>
    </div>
    <div class="frame">
      <div class="viewbar">
        <span class="vb n"><svg><use href="#vr1"/></svg></span><span class="vb n"><svg><use href="#vr2"/></svg></span><i class="vsep"></i>
        <span class="vb three">3D</span><span class="vb"><svg><use href="#cam"/></svg></span><i class="vsep"></i>
        <span class="vb"><svg><use href="#sel1"/></svg></span><span class="vb"><svg><use href="#sel2"/></svg></span><span class="vb"><svg><use href="#sel3"/></svg></span><i class="vsep"></i>
        <span class="vb"><svg><use href="#tri1"/></svg></span><span class="vb"><svg><use href="#tri2"/></svg></span><span class="vb"><svg><use href="#blk1"/></svg></span><span class="vb"><svg><use href="#blk2"/></svg></span><span class="vb"><svg><use href="#blk3"/></svg></span><span class="vb"><svg><use href="#blk4"/></svg></span><span class="vb"><svg><use href="#blk5"/></svg></span><span class="vb"><svg><use href="#tri3"/></svg></span><span class="vb"><svg><use href="#tri4"/></svg></span>
        <span class="vb"><svg viewBox="0 0 20 20"><circle cx="4" cy="11" r="1" fill="#e24a38"/><text class="qt" x="7" y="16">?</text></svg></span>
        <span class="vb"><svg viewBox="0 0 20 20"><use href="#q2"/><text class="qt" x="10" y="14">?</text></svg></span>
        <span class="vb"><svg><use href="#clearsel"/></svg></span>
        <span class="vname">RenderView1</span>
        <span class="vbtn"><svg viewBox="0 0 13 13"><path d="M1.500 2.500h10v8h-10zM6.500 2.500v8" fill="none" stroke="#000"/></svg></span>
        <span class="vbtn"><svg viewBox="0 0 13 13"><path d="M1.500 2.500h10v8h-10zM1.500 6.500h10" fill="none" stroke="#000"/></svg></span>
        <span class="vbtn"><svg viewBox="0 0 13 13"><path d="M1.500 2.500h10v8h-10zM1.500 3.500h10" fill="none" stroke="#000"/></svg></span>
        <span class="vbtn"><svg viewBox="0 0 13 13"><use href="#float"/></svg></span>
        <span class="vbtn"><svg viewBox="0 0 13 13"><use href="#close"/></svg></span>
      </div>
      <div class="view">
        <svg class="scene" viewBox="289 218 1185 802" xmlns="http://www.w3.org/2000/svg">
          <rect x="289" y="218" width="1185" height="802" fill="#52576f"/>
          <g class="wire">
            <path d="M421 277L1299 267M618 295L1177 287M421 277L618 295M1177 287L1299 267"/>
            <path d="M421 277L471 1020M1299 267L1267 1020M618 295L641 822L513 1020M1177 287L1161 827L1236 1020"/>
            <path d="M641 822H700M1161 827L1100 825"/>
          </g>
          <path d="M542 618H610M1155 620H1222" stroke="#fff" stroke-width="1.800" fill="none"/>
          <path d="M542 618l9-4v8z" fill="#d8d8d0"/>
          <path d="M1229 620l-9-5v10z" fill="#a8a89c"/>
          <path d="M875 272L886 292V345H875z" fill="#838799"/>
          <g id="sphere" shape-rendering="crispEdges"></g>
          <path d="M875 272L886 292V345" fill="none" stroke="#7a1010" stroke-width="1.500"/>
          <path d="M886 292V343" stroke="#c53a2c" stroke-width="2"/>
          <path d="M873 272H877V1020H875z" fill="#b00c0c"/>
          <path d="M873 272V320" stroke="#5a0a10" stroke-width="1"/>
          <path d="M884 897L878 1020" stroke="#a80c0c" stroke-width="1.200" fill="none"/>
          <rect class="mark" x="1180" y="597" width="78" height="44" rx="13"/>
          <path class="arrowline" d="M1218 652C1170 692 1080 715 965 710"/>
          <path d="M928 711L971 699L962 710L970 722z" fill="#c4103f"/>
          <g class="orient">
            <path d="M391 919H342" stroke="#e01010" stroke-width="1.200"/>
            <path d="M336 919l10-5v10z" fill="#b00010" stroke="#400" stroke-width=".5"/>
            <path d="M391 919V965" stroke="#10d010" stroke-width="1.200"/>
            <path d="M387 961h8l-4 11z" fill="#10a010"/>
            <ellipse cx="392" cy="912" rx="3.500" ry="6" fill="#f0f020"/>
            <text x="348" y="921">X</text><text x="394" y="910">Y</text><text x="393" y="963">Z</text>
          </g>
          <g id="sbar" shape-rendering="crispEdges"></g>
          <g class="ticks">
            <path d="M1373 744h9M1373 773h9M1373 820h9M1373 867h9M1373 914h9M1373 961h9M1373 1008h9"/>
          </g>
          <g class="sblabels">
            <text x="1387" y="748" textLength="60" lengthAdjust="spacingAndGlyphs">3.3e+03</text>
            <text x="1387" y="778" textLength="36" lengthAdjust="spacingAndGlyphs">3000</text>
            <text x="1387" y="825" textLength="36" lengthAdjust="spacingAndGlyphs">2500</text>
            <text x="1387" y="872" textLength="36" lengthAdjust="spacingAndGlyphs">2000</text>
            <text x="1387" y="919" textLength="36" lengthAdjust="spacingAndGlyphs">1500</text>
            <text x="1387" y="966" textLength="36" lengthAdjust="spacingAndGlyphs">1000</text>
            <text x="1387" y="1012" textLength="60" lengthAdjust="spacingAndGlyphs">5.0e+02</text>
            <text transform="translate(1464 896) rotate(-90)" textLength="40" lengthAdjust="spacingAndGlyphs">temp</text>
          </g>
        </svg>
      </div>
    </div>
  </section>

  <i class="vsplit r"></i>

  <aside class="dock right">
    <div class="docktitle rt"><i class="grip"></i><span>Color Map Editor</span><i class="grip"></i><span class="dbtn"><svg><use href="#float"/></svg></span><span class="dbtn"><svg><use href="#close"/></svg></span></div>
    <div class="cmtop">
      <span class="field search">Search ... (use Esc to clear text)</span>
      <span class="btn sq on"><svg class="bi"><use href="#gear"/></svg></span>
      <span class="btn sq on"><svg class="bi"><use href="#rainbow"/></svg></span>
      <span class="btn sq lite"><svg class="bi" viewBox="0 0 24 24"><use href="#rainbowe"/><text class="et" x="9" y="21">e</text></svg></span>
    </div>
    <div class="arrayname">Array Name: temp</div>
    <div class="cmpanel">
      <div class="cmclip">
        <div class="chk c1"><span class="cb"></span>Lock Data Range</div>
        <div class="chk c2"><span class="cb"></span>Interpret Values As Categories</div>
        <div class="chk c2"><span class="cb"></span>Rescale On Visibility Change</div>
        <div class="section s-md">Mapping Data</div>
        <div class="chartrow">
          <svg class="chart" viewBox="1494 348 330 208" xmlns="http://www.w3.org/2000/svg">
            <defs><clipPath id="tri"><path d="M1501 508L1816 356V508z"/></clipPath></defs>
            <rect x="1494" y="348" width="330" height="208" fill="#fff"/>
            <g id="opac" clip-path="url(#tri)" shape-rendering="crispEdges"></g>
            <path d="M1501 508L1816 356" stroke="#3a3a3a" stroke-width="1.600"/>
            <g id="cbar" shape-rendering="crispEdges"></g>
            <g class="hd"><circle cx="1816" cy="356" r="5.500" fill="#dc4a68"/><circle cx="1501" cy="508" r="5.500" fill="#6c86d8"/><circle cx="1501" cy="536" r="5.500" fill="#6c86d8"/><circle cx="1659" cy="536" r="5.500" fill="#e6e6d8"/><circle cx="1816" cy="536" r="5.500" fill="#dc3a58"/></g>
          </svg>
          <div class="sidebtns">
            <span class="btn sb24"><svg class="bi"><use href="#rescale"/></svg></span>
            <span class="btn sb24"><svg class="bi"><use href="#rescaleC"/></svg></span>
            <span class="btn sb24"><svg class="bi"><use href="#rescaleT"/></svg></span>
            <span class="btn sb24"><svg class="bi"><use href="#rescaleE"/></svg></span>
            <span class="btn sb24"><svg class="bi"><use href="#invert"/></svg></span>
            <span class="btn sb24"><svg class="bi"><use href="#fheart"/></svg></span>
            <span class="btn sb24"><svg class="bi"><use href="#fimport"/></svg></span>
            <span class="btn sb24"><svg class="bi"><use href="#gear"/></svg></span>
          </div>
        </div>
        <div class="frow datar"><label>Data:</label><span class="field datafield"></span></div>
        <div class="chk c3"><span class="cb"></span>Use log scale when mapping data to colors</div>
        <div class="chk c4"><span class="cb"></span>Enable opacity mapping for surfaces</div>
        <div class="section s-a">Color Mapping Parameters</div>
        <div class="frow cspace"><label>Color Space</label><span class="combo csp"><em>Diverging</em><span class="drop"></span></span></div>
        <hr class="rule r3">
        <div class="chk c5"><span class="cb"></span>Use Below Range Color</div>
        <span class="colorbtn b1 dim"><i class="swatch s-g"></i>Below Range Color</span>
        <div class="chk c6"><span class="cb"></span>Use Above Range Color</div>
        <span class="colorbtn b2 dim"><i class="swatch s-w"></i>Above Range Color</span>
        <div class="section s-b">Color Mapping Parameters</div>
        <span class="colorbtn b3"><i class="swatch s-y"></i>Nan Color</span>
        <div class="section s-c">Color Discretization</div>
        <div class="chk c7"><span class="cb on"><svg><use href="#check"/></svg></span>Discretize</div>
        <div class="numrow">
          <label>Number Of<br>Table Values</label>
          <span class="slider"><i class="groove"></i><i class="knob"></i></span>
          <span class="field n256">256</span>
        </div>
        <div class="section s-d">Annotations</div>
        <div class="annot">
          <div class="atable"><div class="ahead"><span class="ah a1">Value</span><span class="ah a2">Annotation</span></div></div>
          <div class="abtns"><span class="btn sb24"><svg class="bi"><use href="#plus"/></svg></span><span class="btn sb24 m"><svg class="bi"><use href="#minus"/></svg></span></div>
        </div>
      </div>
      <div class="vscroll cms">
        <span class="sb up"></span><span class="thumb cth"><i class="dots"></i></span><span class="track"></span><span class="sb up"></span><span class="sb dn"></span>
      </div>
    </div>
  </aside>
</main>

<footer class="status">
  <span class="stbtn"><svg viewBox="0 0 13 13"><path d="M3 3l7 7M10 3l-7 7" stroke="#999" stroke-width="2.400"/></svg></span>
  <span class="stbox"></span>
</footer>
<script src="scene.js"></script>
</body>
</html>
```
FILE: styles.css
```css
* { box-sizing: border-box; }
html, body { margin: 0; padding: 0; }
body {
  width: 1875px; height: 1053px; overflow: hidden;
  background: #eef0ee; color: #14141e;
  font-family: "DejaVu Sans", sans-serif; font-size: 12px;
  display: flex; flex-direction: column;
}
.defs { position: absolute; width: 0; height: 0; }
i, em { font-style: normal; display: block; }
hr { margin: 0; border: 0; }
.axt { font: 9px "Liberation Sans", sans-serif; fill: #777; }
.qt { font: bold 14px "DejaVu Sans", sans-serif; fill: #666; }
.et { font: italic bold 16px "DejaVu Serif", serif; fill: #000; }

.titlebar {
  height: 28px; flex: none; position: relative;
  background: linear-gradient(#3a3b37, #3f3f3a 40%, #4b4a42 75%, #47463f);
  display: flex; align-items: center; justify-content: center;
  border-bottom: 1px solid #f6f6f4;
}
.apptitle { color: #dfdbd2; font: 600 14.700px "Open Sans", sans-serif; white-space: nowrap; margin-top: -1px; }
.wm { position: absolute; right: 5px; top: 7px; display: flex; gap: 4px; }
.wm-b { width: 16px; height: 16px; border-radius: 50%; background: #6e6d67; display: flex; align-items: center; justify-content: center; }
.wm-b svg { width: 10px; height: 10px; display: block; }
.wm-min::after { content: ""; width: 8px; height: 2px; background: #3e3e39; }
.wm-max::after { content: ""; width: 8px; height: 7px; border: 1px solid #3e3e39; }
.wm-cl { background: #e9572c; }

.menubar {
  height: 25px; flex: none; display: flex; align-items: center; gap: 16.150px;
  padding: 0 0 0 11px; border-bottom: 1px solid #b6b9b6;
}
.toolbar {
  height: 39px; flex: none; display: flex; align-items: center;
  border-bottom: 1px solid #b6b9b6;
}
.t3 { height: 38px; padding-bottom: 2px; }
.t3 .tb { width: 35px; }
.tb { width: 34px; height: 33px; flex: none; display: flex; align-items: center; justify-content: center; border: 1px solid transparent; border-radius: 3px; }
.tb.on { background: #c7c9c8; border-color: #8e908e; }
.i { width: 24px; height: 24px; display: block; }
.i.big { width: 28px; height: 28px; }
.tsep { width: 1px; height: 30px; background: #b9bbb8; margin-right: 1px; }
.tgrip {
  width: 4px; height: 30px; margin: 0 3px 0 8px; flex: none;
  background: radial-gradient(circle, #bcbfbb 1px, transparent 1.200px) 0 0 / 2px 3px;
}
.tgrip.first { margin: 0 1px 0 7px; }
.tgrip.g2 { margin: 0 3px 0 8px; }
.tgrip.g3 { margin: 0 2px 0 10px; }
.tgrip.g4 { margin: 0 1px 0 8px; }
.timelbl { width: 36px; flex: none; }
.field {
  display: block; height: 21px; line-height: 19px; padding: 0 4px; white-space: nowrap; overflow: hidden;
  background: #fff; border: 1px solid #9c9e9a; border-radius: 2px; box-shadow: inset 0 1px 1px #d4d4d4;
}
.timefield { width: 127px; flex: none; }
.spin { width: 52px; height: 21px; margin-left: 2px; display: flex; flex: none; border: 1px solid #a6a8a4; border-radius: 3px; background: #e9ebe9; overflow: hidden; }
.spin-val { flex: 1; color: #aaa; padding-left: 4px; line-height: 19px; }
.spin-btns { width: 15px; display: flex; flex-direction: column; border-left: 1px solid #a6a8a4; background: linear-gradient(#e0e0e0, #c9c9c9); }
.ar { flex: 1; position: relative; display: block; }
.ar.up { border-bottom: 1px solid #a6a8a4; }
.ar::after { content: ""; position: absolute; left: 3px; top: 2px; border: 4px solid transparent; }
.ar.up::after { border-bottom-color: #999; border-top: 0; }
.ar.dn::after { border-top-color: #999; border-bottom: 0; top: 3px; }

.combo {
  height: 21px; flex: none; display: flex; align-items: center; position: relative;
  border: 1px solid #999b97; border-radius: 3px; background: linear-gradient(#e4e4e6, #cfcfd3);
  overflow: hidden;
}
.combo em { flex: 1; padding-left: 4px; }
.mini { width: 15px; height: 15px; margin-left: 5px; flex: none; }
.combo .mini + em { padding-left: 3px; }
.drop { width: 16px; height: 100%; flex: none; border-left: 1px solid #999b97; position: relative; }
.drop::after { content: ""; position: absolute; left: 4px; top: 8px; border: 4px solid transparent; border-top-color: #111; border-bottom: 0; }
.c-temp { width: 149px; }
.c-comp { width: 79px; margin-left: 5px; }
.c-comp .drop::after { border-top-color: #999; }
.c-surf { width: 149px; }

.workspace { height: 855px; flex: none; display: flex; }
.dock { flex: none; display: flex; flex-direction: column; position: relative; }
.dock.left { width: 281px; }
.dock.right { width: 395px; }
.dock.right::before { content: ""; position: absolute; left: 1px; top: 286px; width: 3px; height: 280px; background: radial-gradient(circle, #c6c9c5 1px, transparent 1.200px) 0 0 / 3px 3px; }
.docktitle { height: 21px; flex: none; display: flex; align-items: center; padding: 0 3px 0 3px; font-size: 11px; gap: 12px; white-space: nowrap; }
.docktitle .dbtn { margin-left: -7px; }
.docktitle .dbtn + .dbtn { margin-left: -10px; }
.docktitle.small { height: 20px; }
.docktitle.rt { padding-left: 8px; padding-right: 2px; }
.grip { flex: 1; height: 6px; background: radial-gradient(circle, #c6c9c5 1px, transparent 1.200px) 0 0 / 3px 3px; }
.dbtn { width: 13px; height: 13px; flex: none; border: 1px solid #777; border-radius: 2px; background: #eef0ee; overflow: hidden; }
.dbtn svg { width: 11px; height: 11px; display: block; }

.tree { height: 270px; flex: none; position: relative; margin: 1px 3px 0 2px; background: #fff; border: 1px solid #a6a8a4; border-radius: 2px; padding-top: 2px; }
.tree::before { content: ""; position: absolute; left: 34px; top: 0; width: 1px; height: 80px; background: #a6a6a6; }
.row { height: 22px; display: flex; align-items: center; position: relative; }
.child::before { content: ""; position: absolute; left: 34px; top: 11px; width: 12px; height: 1px; background: #a6a6a6; }
.eyeslot { width: 26px; padding-left: 3px; flex: none; }
.eye { width: 15px; height: 12px; display: block; }
.item { display: flex; align-items: center; position: relative; height: 18px; white-space: nowrap; }
.cube { width: 18px; height: 18px; margin-right: 1px; }
.srv { width: 12px; height: 17px; margin: 0 4px 0 3px; }
.child .item { padding-left: 18px; padding-right: 4px; }
.sel { background: #6a94bf; color: #fff; font-weight: bold; outline: 1px dotted #a97a60; outline-offset: -1px; }
.hsplit { flex: none; width: 88px; height: 6px; margin: 0 auto; }

.tabs { height: 22px; flex: none; display: flex; align-items: flex-end; padding-left: 1px; border-bottom: 1px solid #a6a8a4; margin-top: 1px; }
.tab { height: 19px; display: flex; align-items: center; justify-content: center; border: 1px solid #a6a8a4; border-left: 0; border-bottom: 0; border-radius: 2px 2px 0 0; background: linear-gradient(#dedee0, #cacacd); }
.tab.active { width: 67px; height: 22px; background: #eef0ee; border-left: 1px solid #a6a8a4; margin-bottom: -1px; }
.tab.t2 { width: 78px; }
.tab.t3t { width: 132px; }

.btn {
  display: flex; align-items: center; justify-content: center; flex: none; gap: 4px; white-space: nowrap;
  border: 1px solid #a0a29e; border-radius: 3px;
  background: linear-gradient(#e5e5e7, #dcdcde 45%, #d3d3d6);
}
.bi { width: 18px; height: 18px; display: block; flex: none; }
.actions { display: flex; gap: 2px; padding: 11px 0 0 9px; height: 35px; flex: none; }
.actions .btn { width: 75px; height: 24px; }
.actions .apply { background: linear-gradient(#aad78a, #a3d184 75%, #6d9a55); border-color: #6f8f5e; }
.actions .help { width: 30px; color: #4a90d0; font: bold 17px "DejaVu Sans", sans-serif; }
.searchrow { display: flex; align-items: center; gap: 2px; padding-left: 9px; margin-top: 11px; height: 25px; flex: none; }
.search { width: 233px; color: #999; }
.gearbtn { width: 26px; height: 25px; background: #c8cac8; }

.panel { display: flex; margin: 5px 0 0 9px; height: 414px; flex: none; width: 261px; }
.pclip { width: 245px; height: 414px; overflow: hidden; flex: none; }
.pinner { width: 360px; }
.phead { display: flex; height: 28px; gap: 4px; }
.pbox { width: 215px; display: flex; align-items: center; padding-left: 12px; gap: 7px; border: 1px solid #a0a29e; border-radius: 2px; font-size: 12px; }
.bluebar { width: 13px; height: 5px; background: #7b8fd6; border: 1px solid #2f3f80; }
.copy { width: 28px; }
.frow { display: flex; align-items: center; }
.frow label { flex: none; }
.slicetype { margin-top: 6px; height: 21px; }
.slicetype label { width: 65px; }
.wide { width: 240px; }
.section { height: 16px; line-height: 17px; font-weight: bold; border-bottom: 1px solid #555; flex: none; white-space: nowrap; }
.pp { margin-top: 8px; width: 245px; }
.chk { display: flex; align-items: center; height: 16px; gap: 5px; white-space: nowrap; }
.cb { width: 12px; height: 12px; flex: none; margin-left: 1px; display: block; border: 1px solid #999; border-radius: 2px; background: #f6f6f4; overflow: hidden; }
.cb svg { width: 10px; height: 10px; display: block; }
.chk.sp { margin-top: 8px; }
.origin { margin-top: 5px; height: 20px; }
.origin .field { height: 20px; }
.normal { margin-top: 2px; height: 21px; }
.origin label, .normal label { width: 46px; }
.num { width: 100px; margin-right: 2px; flex: none; }
.tight { padding: 0 2px; }
.note { margin-top: 4px; height: 26px; font-weight: bold; line-height: 13px; white-space: nowrap; }
.normals { display: grid; grid-template-columns: 175px 175px; gap: 2px; margin-top: 3px; width: 352px; }
.normals .btn { height: 25px; }
.normals .full { grid-column: 1 / 3; }
.rule { height: 1px; background: #666; }
.r1 { margin-top: 4px; width: 245px; }
.offset { margin-top: 10px; height: 20px; }
.offset label { width: 43px; margin-top: -2px; }
.off { width: 320px; height: 20px; }
.r2 { margin-top: 5px; width: 245px; }
.chk.cr { margin-top: 7px; }
.chk.tr { margin-top: 9px; }

.vscroll { width: 16px; flex: none; display: flex; flex-direction: column; }
.sb { flex: none; width: 16px; height: 16px; display: block; position: relative; border: 1px solid #a0a29e; border-radius: 3px; background: linear-gradient(#e4e4e4, #cfd1d1); }
.sb::after { content: ""; position: absolute; left: 3px; top: 5px; border: 4px solid transparent; }
.sb.up::after { border-bottom-color: #111; border-top: 0; }
.sb.dn::after { border-top-color: #111; border-bottom: 0; }
.sb.lf::after { border-right-color: #111; border-left: 0; left: 5px; top: 3px; }
.sb.rt::after { border-left-color: #111; border-right: 0; left: 5px; top: 3px; }
.thumb { display: flex; align-items: center; justify-content: center; flex: none; background: linear-gradient(90deg, #dde2e3, #c9cdce); border: 1px solid #a8aaa8; border-radius: 1px; }
.pth { height: 70px; }
.track { flex: 1; background: repeating-conic-gradient(#d6d7d5 0 25%, #f6f6f4 0 50%) 0 0 / 2px 2px; }
.dots { width: 10px; height: 18px; background: radial-gradient(circle, #adb0ae 1px, transparent 1.200px) 0 0 / 3px 3px; }
.hscroll { display: flex; height: 16px; margin-left: 9px; width: 245px; flex: none; }
.hthumb { width: 136px; display: flex; align-items: center; justify-content: center; background: linear-gradient(#dde2e3, #c9cdce); border: 1px solid #a8aaa8; flex: none; }
.hthumb .dots { width: 18px; height: 10px; }
.htrack { flex: 1; background: repeating-conic-gradient(#d6d7d5 0 25%, #f6f6f4 0 50%) 0 0 / 2px 2px; }

.vsplit { width: 4px; flex: none; position: relative; }
.vsplit::before { content: ""; position: absolute; left: 0; top: 286px; width: 3px; height: 315px; background: radial-gradient(circle, #c6c9c5 1px, transparent 1.200px) 0 0 / 3px 3px; }
.vsplit.r { width: 0; }
.vsplit.r::before { display: none; }
.center { width: 1195px; flex: none; display: flex; flex-direction: column; }
.tabrow { height: 21px; flex: none; display: flex; align-items: flex-end; padding-left: 1px; margin-top: 1px; }
.ltab { height: 21px; width: 114px; display: flex; align-items: center; justify-content: center; gap: 5px; padding-bottom: 1px; border: 1px solid #a6a8a4; border-bottom: 0; border-radius: 3px 3px 0 0; background: #eef0ee; margin-bottom: -1px; position: relative; z-index: 1; }
.ltab.plus { width: 34px; height: 18px; background: linear-gradient(#dedee0, #cacacd); margin-bottom: 0; font-size: 14px; z-index: 0; }
.wnd { width: 12px; height: 12px; flex: none; }
.wnd.x { width: 13px; height: 13px; }
.frame { flex: 1; width: 1193px; border: 1px solid #a6a8a4; display: flex; flex-direction: column; min-height: 0; }
.viewbar { height: 23px; flex: none; display: flex; align-items: center; padding-left: 5px; }
.vb { width: 22px; height: 22px; flex: none; display: flex; align-items: center; justify-content: center; }
.vb.n { width: 20px; }
.vb svg { width: 18px; height: 18px; display: block; }
.three { font-size: 10px; color: #333; }
.vsep { width: 1px; height: 18px; background: #b0b2ae; flex: none; margin: 0 0.500px; }
.vname { margin-left: auto; margin-right: 11px; font-weight: bold; text-decoration: underline; }
.vbtn { width: 21px; height: 21px; margin-right: 2px; flex: none; display: flex; align-items: center; justify-content: center; border: 1px solid #8e908e; border-radius: 3px; background: #eef0ee; }
.vbtn:last-child { margin-right: 1px; }
.vbtn svg { width: 13px; height: 13px; display: block; }
.view { flex: 1; border: 2px solid #0000f0; padding: 1px; background: #e8e8ee; min-height: 0; }
.scene { display: block; width: 1185px; height: 802px; }
.wire path { stroke: #fff; stroke-width: 1.100; fill: none; }
.mark { fill: none; stroke: #c4103f; stroke-width: 7; }
.arrowline { fill: none; stroke: #c4103f; stroke-width: 4.500; }
.orient text { fill: #fff; font: 15px "Liberation Sans", sans-serif; }
.ticks path { stroke: #fff; stroke-width: 1.500; }
.sblabels text { fill: #fff; font: 17px "Liberation Sans", sans-serif; }
.hd circle { stroke: #a8a89a; stroke-width: 2; }

.cmtop { display: flex; align-items: center; gap: 2px; padding-left: 14px; height: 25px; margin-top: 10px; flex: none; }
.cmtop .search { width: 288px; }
.sq { width: 26px; height: 25px; }
.sq.on { background: #c8cac8; }
.sq.lite { background: #eef0ee; }
.arrayname { padding-left: 14px; height: 16px; line-height: 16px; margin-top: 5px; flex: none; }
.cmpanel { display: flex; margin: 4px 0 0 14px; height: 766px; flex: none; width: 372px; }
.cmclip { width: 356px; height: 766px; overflow: hidden; flex: none; margin-right: 1px; }
.cms { width: 15px; }
.cms .sb { width: 15px; }
.cth { height: 609px; margin-top: 1px; }
.chk.c1 { margin-top: 2px; }
.chk.c2 { margin-top: 8px; }
.s-md { margin-top: 10px; }
.chartrow { display: flex; margin-top: 6px; height: 208px; }
.chart { width: 330px; height: 208px; display: block; flex: none; }
.sidebtns { display: flex; flex-direction: column; gap: 2px; width: 26px; flex: none; }
.sb24 { width: 26px; height: 24px; }
.datar { margin-top: 7px; height: 20px; }
.datar label { width: 39px; }
.datafield { width: 316px; height: 20px; background: #eef0ee; }
.c3 { margin-top: 8px; }
.c4 { margin-top: 10px; }
.s-a { margin-top: 9px; }
.cspace { margin-top: 6px; height: 21px; }
.cspace label { width: 105px; margin-top: -4px; }
.csp { width: 250px; }
.r3 { margin-top: 4px; }
.c5 { margin-top: 12px; }
.colorbtn { display: flex; align-items: center; height: 24px; padding-left: 5px; gap: 4px; border: 1px solid #9c9e9a; border-radius: 3px; width: 355px; background: linear-gradient(#eef0ee 60%, #dfe1df); }
.dim { color: #999; }
.swatch { width: 15px; height: 15px; border-radius: 50%; border: 1px solid #888; flex: none; }
.s-g { background: #5c5e60; }
.s-w { background: #eef0ee; }
.s-y { background: #ffff00; }
.b1 { margin-top: 7px; }
.c6 { margin-top: 7px; }
.b2 { margin-top: 6px; }
.s-b { margin-top: 9px; }
.b3 { margin-top: 6px; }
.s-c { margin-top: 9px; }
.c7 { margin-top: 8px; }
.numrow { display: flex; align-items: center; margin-top: 7px; height: 28px; }
.numrow label { width: 105px; line-height: 14px; flex: none; }
.slider { width: 117px; height: 20px; flex: none; position: relative; display: block; }
.groove { position: absolute; left: 0; right: 0; top: 8px; height: 4px; border: 1px solid #9c9e9a; border-radius: 2px; background: #e8e8e8; }
.knob { position: absolute; left: 26px; top: 2px; width: 10px; height: 15px; background: #d0d2d0; border: 1px solid #888; border-radius: 2px 2px 5px 5px; }
.n256 { width: 126px; margin-left: 7px; height: 20px; flex: none; }
.s-d { margin-top: 9px; }
.annot { display: flex; margin-top: 7px; gap: 4px; }
.atable { width: 326px; height: 60px; background: #fff; border: 1px solid #9c9e9a; padding: 1px; flex: none; }
.ahead { display: flex; height: 22px; }
.ah { display: flex; align-items: center; justify-content: center; border: 1px solid #a6a8a4; background: linear-gradient(#dfe1e1, #ced0d0); }
.a1 { width: 47px; }
.a2 { flex: 1; }
.abtns { display: flex; flex-direction: column; gap: 5px; }

.status { height: 29px; flex: none; display: flex; padding: 3px 6px 2px 937px; }
.stbtn { width: 22px; display: flex; align-items: center; justify-content: center; border: 1px solid #a0a29e; border-radius: 2px; background: #e6e6e6; }
.stbtn svg { width: 13px; height: 13px; }
.stbox { flex: 1; border: 2px solid #a6a8a4; border-left: 0; border-radius: 0 3px 3px 0; }
```
FILE: scene.js
```js
var NS = 'http://www.w3.org/2000/svg';
function add(parent, tag, attrs) {
  var e = document.createElementNS(NS, tag);
  for (var k in attrs) e.setAttribute(k, attrs[k]);
  parent.appendChild(e);
  return e;
}
function rgb(h) { return [parseInt(h.substr(1, 2), 16), parseInt(h.substr(3, 2), 16), parseInt(h.substr(5, 2), 16)]; }
function hex(c) { return '#' + c.map(function (v) { v = Math.max(0, Math.min(255, Math.round(v))); return (v < 16 ? '0' : '') + v.toString(16); }).join(''); }
function mul(h, s) { return hex(rgb(h).map(function (v) { return v * s; })); }
function mix(a, b, t) { var x = rgb(a), y = rgb(b); return hex(x.map(function (v, i) { return v + (y[i] - v) * t; })); }

/* discretised colour map: [right edge in zoom units, colour] */
var EDGES = [66, 122, 162, 222, 285, 336, 390, 438, 486, 533, 570, 588, 636, 680, 714, 741, 780, 800, 825, 862, 925, 948, 996, 1008];
var COLS = ['#3f50c6', '#506bd8', '#5f80ea', '#7d9ff5', '#8eabfa', '#a2bdfb', '#b6ccf5', '#bfd2ea', '#ccd5e0', '#e0dcd8', '#e8d8cc', '#f6d9cb', '#f9c9b4', '#f7bba4', '#f5ab90', '#f19a7d', '#ea8a6e', '#e67e64', '#dd6a52', '#d55042', '#c83c37', '#be2632', '#b40426'];

var opac = document.getElementById('opac');
var cbar = document.getElementById('cbar');
var sbar = document.getElementById('sbar');
add(opac, 'rect', { x: 1494, y: 348, width: 10, height: 160, fill: '#eef2f6' });
COLS.forEach(function (c, i) {
  var a = EDGES[i], b = EDGES[i + 1];
  var x0 = 1480 + a / 3, x1 = 1480 + b / 3;
  var t = ((a + b) / 2 - 66) / 942;
  add(opac, 'rect', { x: x0, y: 348, width: x1 - x0 + 0.5, height: 160, fill: mix('#ffffff', c, t) });
  add(cbar, 'rect', { x: x0, y: 524, width: x1 - x0 + 0.5, height: 24, fill: c });
  var y1 = 1008 - (a - 66) / 942 * 264, y0 = 1008 - (b - 66) / 942 * 264;
  add(sbar, 'rect', { x: 1358, y: y0, width: 15, height: y1 - y0 + 0.5, fill: c });
});

/* the sphere: flat cells on a latitude/longitude grid */
var cx = 882, cy = 620, R = 277, rad = Math.PI / 180;
var DLAT = 5.625, DLON = 6.35;
var L = [-0.12, 0.42, 0.9];
function pick(table, y, dflt) {
  for (var i = 0; i < table.length; i++) if (y < table[i][0]) return table[i][1];
  return dflt;
}
var RED_BAND = [[360, '#b04a38'], [372, '#c9604a'], [392, '#ef8a70'], [420, '#e87860'], [436, '#dd6048'], [452, '#c84040'], [466, '#b83a30'], [483, '#b53a30'], [500, '#a82a20'], [523, '#9e1c18']];
var BLUE_BAND = [[360, '#6a90c0'], [380, '#98b0e8'], [392, '#6098cc'], [432, '#6a88d8'], [465, '#5070c8'], [483, '#4868c0'], [490, '#4860b0'], [520, '#3850a8']];
var STRIP = [[500, '#c8c4b4'], [520, '#bcbaac'], [620, '#b4b4a8'], [680, '#a8a89c'], [760, '#8c8c88'], [790, '#7a7a78'], [820, '#666664'], [850, '#555552'], [880, '#5a4a30']];
var sph = document.getElementById('sphere');
function pt(lat, lon) {
  return [cx + R * Math.cos(lat * rad) * Math.sin(lon * rad), cy - R * Math.sin(lat * rad)];
}
for (var la = -90; la < 90 - 0.01; la += DLAT) {
  for (var k = -15; k <= 14; k++) {
    var l0 = Math.max(-90, -1 + DLON * k), l1 = Math.min(90, l0 + DLON);
    if (l1 <= l0) continue;
    var lm = (l0 + l1) / 2 * rad, pm = (la + DLAT / 2) * rad;
    var n = [Math.cos(pm) * Math.sin(lm), Math.sin(pm), Math.cos(pm) * Math.cos(lm)];
    var d = Math.max(0, n[0] * L[0] + n[1] * L[1] + n[2] * L[2]);
    var s = Math.round((0.43 + 0.57 * Math.pow(d, 1.5)) * 13) / 13;
    var y = cy - R * Math.sin(pm);
    var col;
    if (k === -1) col = pick(STRIP, y, '#4c3c28');
    else if (k === 0) col = y > 850 ? '#1b3262' : pick(BLUE_BAND, y, mul('#2f449f', s));
    else if (k === -2) col = y > 850 ? '#503020' : y > 820 ? '#4a100c' : pick(RED_BAND, y, mul('#a00020', s));
    else col = mul(l0 < -1 ? '#a00020' : '#2f449f', s);
    var pts = [];
    for (var j = 0; j <= 4; j++) pts.push(pt(la + DLAT * j / 4, l0));
    for (j = 4; j >= 0; j--) pts.push(pt(la + DLAT * j / 4, l1));
    add(sph, 'polygon', { points: pts.map(function (p) { return p[0].toFixed(1) + ',' + p[1].toFixed(1); }).join(' '), fill: col, stroke: col, 'stroke-width': 0.6 });
  }
}
```
